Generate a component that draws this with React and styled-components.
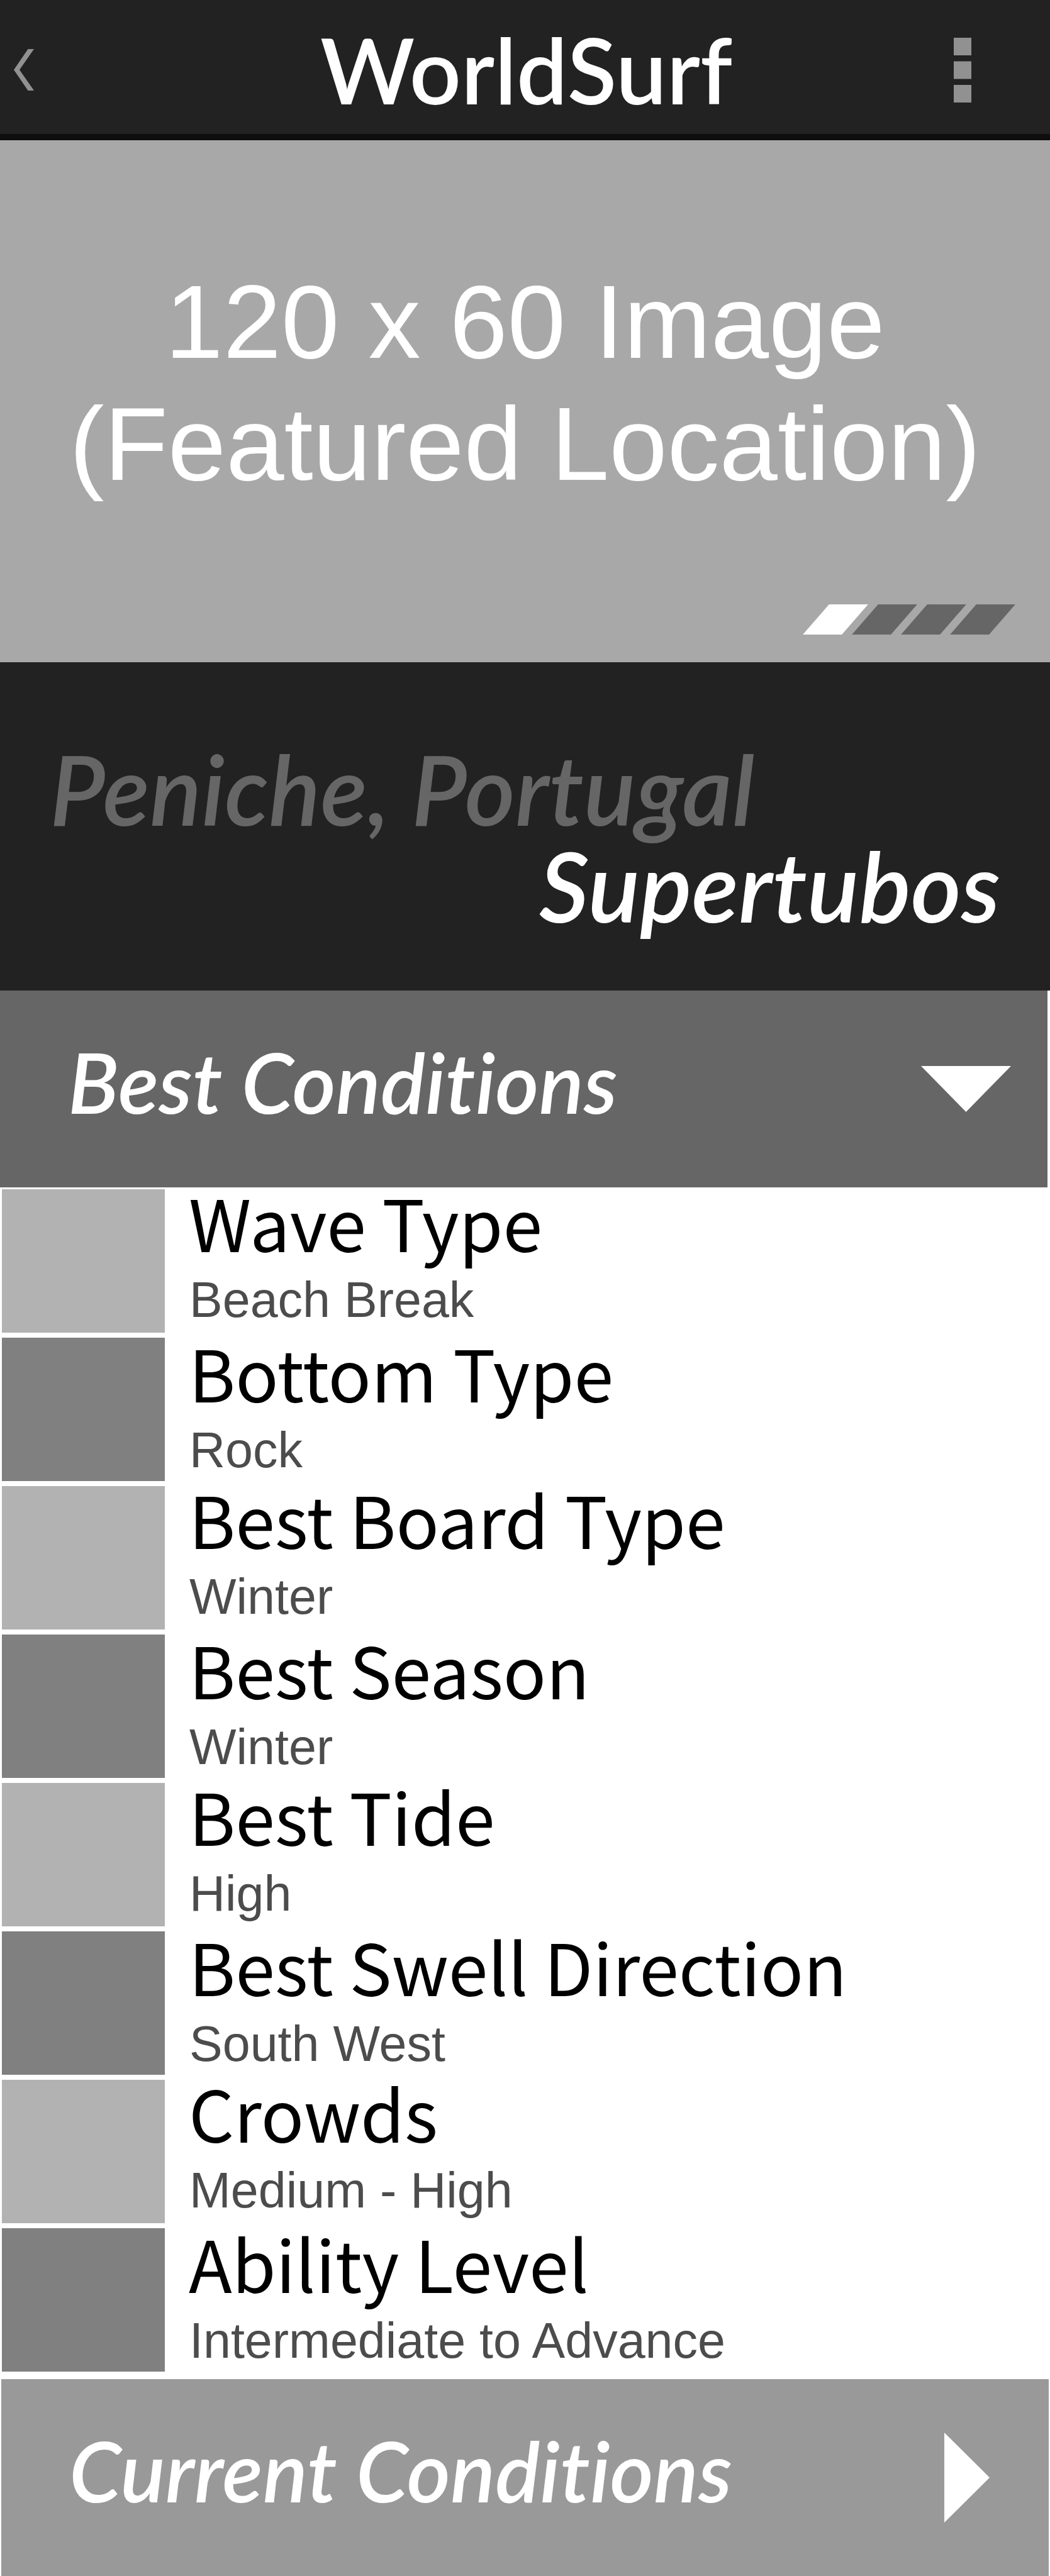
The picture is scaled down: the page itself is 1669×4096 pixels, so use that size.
import React, { useState } from "react";
import styled, { createGlobalStyle } from "styled-components";

const GlobalStyle = createGlobalStyle`
  * { box-sizing: border-box; }
  body { margin: 0; background: #fff; font-family: "Liberation Sans", Arial, sans-serif; }
  h1, h2, p, ul, dl, dt, dd { margin: 0; padding: 0; }
  button { border: 0; padding: 0; background: none; color: inherit; cursor: pointer; }
  svg { display: block; }
`;

const display = `"Lato", "Liberation Sans", sans-serif`;

const Header = styled.header`
  display: grid;
  grid-template-columns: 280px 1fr 276px;
  align-items: center;
  height: 223px;
  padding-top: 9px;
  background: #222;
  border-bottom: 10px solid #0e0e0e;
`;

const BackButton = styled.button`
  justify-self: start;
  padding: 16px 22px;
`;

const MenuButton = styled.button`
  justify-self: end;
  padding-right: 125px;
`;

const AppTitle = styled.h1`
  color: #fff;
  font: 600 144px/180px ${display};
  text-align: center;
  white-space: nowrap;
`;

const Featured = styled.section`
  display: flex;
  flex-direction: column;
  justify-content: space-between;
  height: 830px;
  padding: 192px 55px 44px;
  background: #a8a8a8;
`;

const FeaturedLabel = styled.p`
  color: #fff;
  font-size: 166px;
  line-height: 194px;
  text-align: center;
`;

const Pager = styled.div`
  display: flex;
  gap: 16px;
  align-self: flex-end;
  padding-right: 21px;
`;

const PagerMark = styled.button`
  width: 62px;
  height: 48px;
  background: ${(p) => (p.$active ? "#fff" : "#666")};
  transform: skewX(-41deg);
`;

const Place = styled.section`
  height: 522px;
  padding: 124px 79px 0;
  background: #222;
  font: italic 600 154px/154px ${display};
`;

const Region = styled.p`
  color: #666;
`;

const Spot = styled.p`
  color: #fff;
  text-align: right;
`;

const SectionBar = styled.h2`
  margin: ${(p) => (p.$open ? "0 4px 3px 0" : "12px 2px 0")};
  background: ${(p) => (p.$open ? "#666" : "#999")};
`;

const SectionButton = styled.button`
  display: flex;
  align-items: center;
  justify-content: space-between;
  width: 100%;
  height: 313px;
  padding: 0 58px 0 108px;
  color: #fff;
  font: italic 600 133px/156px ${display};
  font-variant-ligatures: none;
`;

const SectionLabel = styled.span`
  padding-bottom: 24px;
`;

const ArrowBox = styled.span`
  display: grid;
  place-items: center;
  width: 144px;
  height: 144px;
`;

const Conditions = styled.dl`
  display: flex;
  flex-direction: column;
  gap: 8px;
  padding-left: 3px;
`;

const Row = styled.div`
  display: grid;
  grid-template-columns: 259px 1fr;
  grid-template-rows: auto 1fr;
  column-gap: 38px;
  height: 228px;
  background: linear-gradient(${(p) => (p.$dark ? "#808080, #808080" : "#b2b2b2, #b2b2b2")}) 0 0 / 259px 100% no-repeat;
`;

const Term = styled.dt`
  grid-column: 2;
  padding: ${(p) => (p.$dark ? "4px 0 26px" : "1px 0 26px")};
  color: #000;
  font: 400 113px/100px "Noto Sans CJK JP", "Noto Sans", sans-serif;
`;

const Detail = styled.dd`
  grid-column: 2;
  padding-left: 1px;
  color: #4c4c4c;
  font-size: 79px;
  line-height: 98px;
`;

const rows = [
  ["Wave Type", "Beach Break"],
  ["Bottom Type", "Rock"],
  ["Best Board Type", "Winter"],
  ["Best Season", "Winter"],
  ["Best Tide", "High"],
  ["Best Swell Direction", "South West"],
  ["Crowds", "Medium - High"],
  ["Ability Level", "Intermediate to Advance"],
];

function Section({ title, open, onToggle }) {
  return (
    <SectionBar $open={open}>
      <SectionButton type="button" aria-expanded={open} onClick={onToggle}>
        <SectionLabel>{title}</SectionLabel>
        <ArrowBox aria-hidden="true">
          {open ? (
            <svg width="143" height="73" viewBox="0 0 143 73" fill="#fff">
              <path d="M0 0H143L71.500 73Z" />
            </svg>
          ) : (
            <svg width="72" height="143" viewBox="0 0 72 143" fill="#fff">
              <path d="M0 0L72 71.500L0 143Z" />
            </svg>
          )}
        </ArrowBox>
      </SectionButton>
    </SectionBar>
  );
}

export default function App() {
  const [page, setPage] = useState(0);
  const [bestOpen, setBestOpen] = useState(true);
  const [currentOpen, setCurrentOpen] = useState(false);
  return (
    <>
      <GlobalStyle />
      <Header>
        <BackButton type="button" aria-label="Back">
          <svg width="32" height="66" viewBox="0 0 32 66" fill="#919191">
            <path d="M22.500 0H32L9 33L32 66H22.500L0 33Z" />
          </svg>
        </BackButton>
        <AppTitle>WorldSurf</AppTitle>
        <MenuButton type="button" aria-label="Menu">
          <svg width="28" height="103" viewBox="0 0 28 103" fill="#919191">
            <path d="M0 0H28V28H0ZM0 37.500H28V65.500H0ZM0 75H28V103H0Z" />
          </svg>
        </MenuButton>
      </Header>
      <main>
        <Featured>
          <FeaturedLabel>
            120 x 60 Image
            <br />
            (Featured Location)
          </FeaturedLabel>
          <Pager>
            {[0, 1, 2, 3].map((i) => (
              <PagerMark
                key={i}
                type="button"
                aria-label={`Image ${i + 1}`}
                $active={i === page}
                onClick={() => setPage(i)}
              />
            ))}
          </Pager>
        </Featured>
        <Place>
          <Region>Peniche, Portugal</Region>
          <Spot>Supertubos</Spot>
        </Place>
        <Section title="Best Conditions" open={bestOpen} onToggle={() => setBestOpen(!bestOpen)} />
        {bestOpen && (
          <Conditions>
            {rows.map(([term, detail], i) => (
              <Row key={term} $dark={i % 2 === 1}>
                <Term $dark={i % 2 === 1}>{term}</Term>
                <Detail>{detail}</Detail>
              </Row>
            ))}
          </Conditions>
        )}
        <Section title="Current Conditions" open={currentOpen} onToggle={() => setCurrentOpen(!currentOpen)} />
      </main>
    </>
  );
}
